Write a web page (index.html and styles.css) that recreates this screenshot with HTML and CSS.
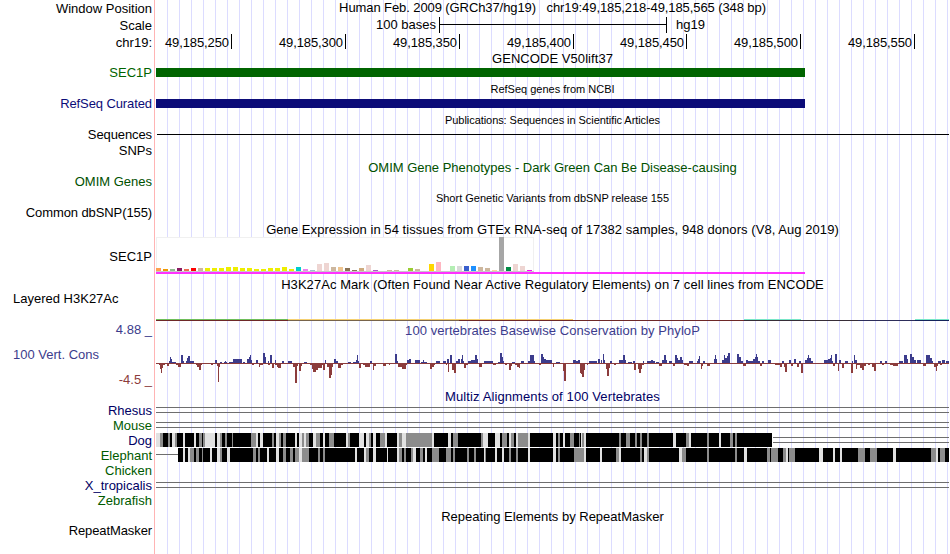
FILE: index.html
```
<!DOCTYPE html>
<html lang="en">
<head>
  <meta charset="UTF-8">
  <title>chr19:49,185,218-49,185,565 - Genome Browser</title>
  <link rel="stylesheet" href="styles.css">
</head>
<body>

<div class="browser">
  <div class="row position">
    <div class="label">Window Position</div>
    <div class="title t-position">Human Feb. 2009 (GRCh37/hg19) &nbsp; chr19:49,185,218-49,185,565 (348 bp)</div>
  </div>

  <div class="row scale">
    <div class="label">Scale</div>
    <div class="scale-track">
      <span class="scale-text">100 bases</span>
      <span class="scale-bar"></span>
      <span class="scale-db">hg19</span>
    </div>
  </div>

  <div class="row ruler">
    <div class="label">chr19:</div>
    <div class="ruler-track">
      <span>49,185,250</span>
      <span>49,185,300</span>
      <span>49,185,350</span>
      <span>49,185,400</span>
      <span class="short">49,185,450</span>
      <span>49,185,500</span>
      <span>49,185,550</span>
    </div>
  </div>

  <div class="row head">
    <div class="label"></div>
    <div class="title t-gencode">GENCODE V50lift37</div>
  </div>
  <div class="row gene">
    <div class="label green">SEC1P</div>
    <div class="gene-bar gencode"></div>
  </div>

  <div class="row head small">
    <div class="label"></div>
    <div class="title">RefSeq genes from NCBI</div>
  </div>
  <div class="row gene">
    <div class="label navy tight">RefSeq Curated</div>
    <div class="gene-bar refseq"></div>
  </div>

  <div class="row head small">
    <div class="label"></div>
    <div class="title t-pubs">Publications: Sequences in Scientific Articles</div>
  </div>
  <div class="row sequences">
    <div class="label tight">Sequences</div>
    <div class="seq-line"></div>
  </div>
  <div class="row snps">
    <div class="label">SNPs</div>
  </div>

  <div class="row head">
    <div class="label"></div>
    <div class="title omim">OMIM Gene Phenotypes - Dark Green Can Be Disease-causing</div>
  </div>
  <div class="row gene">
    <div class="label omim">OMIM Genes</div>
  </div>

  <div class="row head small">
    <div class="label"></div>
    <div class="title">Short Genetic Variants from dbSNP release 155</div>
  </div>
  <div class="row dbsnp">
    <div class="label tight">Common dbSNP(155)</div>
  </div>

  <div class="row head">
    <div class="label"></div>
    <div class="title wide">Gene Expression in 54 tissues from GTEx RNA-seq of 17382 samples, 948 donors (V8, Aug 2019)</div>
  </div>
  <div class="row gtex">
    <div class="label">SEC1P</div>
    <svg id="gtex" width="793" height="41" viewBox="156 236 793 41"></svg>
  </div>

  <div class="row head">
    <div class="label"></div>
    <div class="title wide">H3K27Ac Mark (Often Found Near Active Regulatory Elements) on 7 cell lines from ENCODE</div>
  </div>
  <div class="row h3k">
    <div class="label left">Layered H3K27Ac</div>
    <svg id="h3k" width="793" height="32" viewBox="156 291 793 32"></svg>
  </div>

  <div class="row head">
    <div class="label limit-max">4.88 _</div>
    <div class="title phylop wide">100 vertebrates Basewise Conservation by PhyloP</div>
  </div>
  <div class="row cons">
    <div class="label">
      <div class="cons-name">100 Vert. Cons</div>
      <div class="limit-min">-4.5 _</div>
    </div>
    <svg id="phylop" width="793" height="52" viewBox="156 337 793 52"></svg>
  </div>

  <div class="row head">
    <div class="label"></div>
    <div class="title multiz t-multiz">Multiz Alignments of 100 Vertebrates</div>
  </div>
  <div class="row species">
    <div class="label multiz">Rhesus</div>
    <div class="gap-lines"></div>
  </div>
  <div class="row species">
    <div class="label green2">Mouse</div>
    <div class="gap-lines"></div>
  </div>
  <div class="row species">
    <div class="label multiz">Dog</div>
    <svg id="dog" width="793" height="15" viewBox="156 0 793 15"></svg>
  </div>
  <div class="row species">
    <div class="label green2">Elephant</div>
    <svg id="elephant" width="793" height="15" viewBox="156 0 793 15"></svg>
  </div>
  <div class="row species">
    <div class="label green2">Chicken</div>
  </div>
  <div class="row species">
    <div class="label multiz">X_tropicalis</div>
    <div class="gap-lines"></div>
  </div>
  <div class="row species">
    <div class="label green2">Zebrafish</div>
  </div>

  <div class="row head repeats">
    <div class="label"></div>
    <div class="title">Repeating Elements by RepeatMasker</div>
  </div>
  <div class="row">
    <div class="label tight">RepeatMasker</div>
  </div>
</div>

<script src="tracks.js"></script>
</body>
</html>
```
FILE: styles.css
```
body {
  margin: 0;
  background-color: #fff;
  font-family: "Liberation Sans", Arial, Helvetica, sans-serif;
  font-size: 13px;
  line-height: 15px;
  color: #000;
}

/* guide lines every 12px, starting right of the label column */
.browser {
  width: 949px;
  height: 554px;
  overflow: hidden;
  background-image:
    linear-gradient(#ffb4b4, #ffb4b4),
    repeating-linear-gradient(to right, #dcdcff 0, #dcdcff 1px, transparent 1px, transparent 12px);
  background-size: 1px 100%, 782px 100%;
  background-position: 154px 0, 167px 0;
  background-repeat: no-repeat;
}

.row {
  display: grid;
  grid-template-columns: 152px 793px;
  column-gap: 4px;
  white-space: nowrap;
}

.label {
  text-align: right;
}

.label.left {
  text-align: left;
  padding: 0 0 0 13px;
}

.label.tight {
  letter-spacing: -0.1px;
}

.title {
  text-align: center;
}

.title.wide {
  letter-spacing: 0.06px;
}

.t-position { letter-spacing: -0.09px; }
.t-gencode { letter-spacing: 0.06px; }
.t-pubs { letter-spacing: -0.06px; }
.t-multiz { letter-spacing: 0.11px; }

.head {
  height: 14px;
}

.head.small {
  height: 13px;
  font-size: 11px;
  line-height: 12px;
}

svg {
  display: block;
  shape-rendering: crispEdges;
}

/* colours */
.green { color: #006400; }
.green2 { color: #005a00; }
.navy { color: #0c0c78; }
.omim { color: #005000; }
.phylop { color: #3c3c8c; }
.multiz { color: #000064; }

/* position, scale and ruler */
.position {
  height: 17px;
}

.position .label,
.scale .label,
.ruler .label {
  padding-top: 1px;
}

.scale,
.ruler {
  height: 17px;
}

.scale-track {
  display: flex;
  padding-left: 220px;
}

.scale-text {
  width: 60px;
  margin-right: 3px;
  text-align: right;
}

.scale-bar {
  width: 226px;
  height: 16px;
  border-left: 1px solid #000;
  border-right: 1px solid #000;
  background: linear-gradient(#000, #000) 0 7px / 100% 1px no-repeat;
}

.scale-db {
  margin-left: 9px;
}

.ruler-track {
  display: flex;
}

.ruler-track span {
  box-sizing: border-box;
  width: 114px;
  height: 15px;
  padding: 1px 2px 0 0;
  border-right: 1px solid #000;
  text-align: right;
  letter-spacing: -0.1px;
}

.ruler-track span:first-child {
  width: 76px;
}

.ruler-track .short {
  width: 113px;
}

/* genes */
.gene {
  height: 18px;
}

.gene-bar {
  width: 649px;
  height: 9px;
  margin-top: 3px;
}

.gencode { background-color: #006400; }
.refseq { background-color: #0c0c78; }

.sequences {
  height: 16px;
}

.seq-line {
  height: 1px;
  margin: 7px 0 0 1px;
  background-color: #000;
}

.snps,
.dbsnp {
  height: 17px;
}

/* signal tracks */
.gtex {
  height: 41px;
}

.gtex .label {
  padding-top: 13px;
}

.h3k {
  height: 32px;
}

.limit-max {
  margin-top: -1px;
  color: #3c3c8c;
}

.cons {
  height: 52px;
}

.cons-name {
  padding: 10px 0 10px 13px;
  text-align: left;
  color: #3c3c8c;
}

.limit-min {
  color: #8c3c3c;
}

/* multiz */
.species {
  height: 15px;
}

.gap-lines {
  height: 4px;
  margin-top: 4px;
  border-top: 1px solid #6e6e6e;
  border-bottom: 1px solid #6e6e6e;
}

.repeats {
  margin-top: 1px;
}
```
FILE: tracks.js
```
const SVG_NS = "http://www.w3.org/2000/svg";

function addRect(svg, x, y, width, height, fill) {
  const rect = document.createElementNS(SVG_NS, "rect");
  rect.setAttribute("x", x);
  rect.setAttribute("y", y);
  rect.setAttribute("width", width);
  rect.setAttribute("height", height);
  rect.setAttribute("fill", fill);
  svg.appendChild(rect);
}

// GTEx: one bar per tissue, [height, colour]
const tissues = [
  [3, "#ff9f4f"], [2, "#ee9a00"], [2, "#8fbc8f"], [3, "#8b1c62"], [2, "#ee6a50"], [3, "#ff0000"],
  [3, "#cdb79e"], [3, "#eeee00"], [3, "#eeee00"], [3, "#eeee00"], [4, "#eeee00"], [4, "#eeee00"],
  [3, "#eeee00"], [3, "#eeee00"], [2, "#eeee00"], [2, "#eeee00"], [3, "#eeee00"], [3, "#eeee00"],
  [4, "#eeee00"], [2, "#eeee00"], [4, "#00cdcd"], [2, "#ee82ee"], [1, "#9ac0cd"], [7, "#eed5d2"],
  [8, "#eed5d2"], [4, "#cdb79e"], [4, "#eec591"], [3, "#8b7355"], [1, "#8b7355"], [3, "#cdaa7d"],
  [6, "#eed5d2"], [1, "#b452cd"], [0, "#7a378b"], [1, "#cdb79e"], [1, "#cdb79e"], [0, "#cdb79e"],
  [3, "#9acd32"], [2, "#cdb79e"], [0, "#7a67ee"], [7, "#ffd700"], [9, "#ffb6c1"], [0, "#cd9b1d"],
  [5, "#b4eeb4"], [5, "#d9d9d9"], [5, "#3a5fcd"], [5, "#1e90ff"], [4, "#cdb79e"], [3, "#cdb79e"],
  [1, "#ffd39b"], [34, "#a6a6a6"], [4, "#008b45"], [7, "#eed5d2"], [5, "#eed5d2"], [1, "#ff00ff"]
];

function drawGtex() {
  const svg = document.getElementById("gtex");
  addRect(svg, 156, 237, 378, 35, "#f0f0f0");
  addRect(svg, 157, 238, 376, 33, "#ffffff");
  addRect(svg, 156, 271, 378, 1, "#c8c8c8");
  tissues.forEach(([height, colour], i) => {
    addRect(svg, 156 + i * 7, 271 - height, 5, height, colour);
  });
  addRect(svg, 156, 272, 649, 2, "#ff32ff");
}

function drawH3k() {
  const svg = document.getElementById("h3k");
  addRect(svg, 156, 319, 132, 1, "#6ebe5a");
  addRect(svg, 288, 319, 285, 1, "#f5d070");
  addRect(svg, 744, 319, 57, 1, "#78e6c8");
  addRect(svg, 915, 319, 34, 1, "#78e6c8");
  addRect(svg, 156, 320, 132, 1, "#6e2828");
  addRect(svg, 288, 320, 171, 1, "#78644b");
  addRect(svg, 459, 320, 285, 1, "#6e2828");
  addRect(svg, 744, 320, 114, 1, "#372d37");
  addRect(svg, 858, 320, 57, 1, "#2d2d5a");
  addRect(svg, 915, 320, 34, 1, "#14235a");
}

// PhyloP scores as [x, width, height], negative heights hang below the axis
const scores = [
  [159, 1, -2], [160, 1, -6], [161, 1, -10], [162, 1, -5], [163, 2, -2], [167, 2, -3],
  [169, 1, 2], [170, 1, 6], [171, 1, 4], [172, 4, 1], [176, 2, -2], [178, 3, -4],
  [181, 2, 8], [183, 1, 2], [186, 1, 2], [187, 1, 5], [188, 2, 7], [190, 4, 2],
  [196, 1, -2], [197, 2, -4], [199, 2, -7], [201, 1, -2], [211, 2, -2], [215, 2, 3],
  [217, 1, -3], [218, 1, -19], [219, 1, -4], [220, 2, 1], [224, 3, 1], [225, 1, 2],
  [229, 4, 1], [233, 9, 4], [243, 2, 1], [247, 2, 4], [249, 1, 6], [250, 1, 8], [251, 1, 3],
  [252, 2, -2], [256, 2, 3], [259, 1, -4], [260, 3, -2], [263, 2, 10], [265, 1, 6],
  [268, 1, 2], [268, 2, -2], [270, 2, 8], [272, 2, -5], [275, 1, 3], [275, 2, -2],
  [277, 1, -4], [278, 3, -5], [282, 2, 2], [283, 2, -1], [288, 4, 2], [293, 2, -4],
  [295, 2, -20], [297, 1, -3], [299, 2, -8], [301, 1, -3], [304, 3, 1], [310, 2, -2],
  [312, 1, -6], [313, 3, -9], [316, 2, -7], [318, 4, -5], [322, 1, -2], [323, 2, -7],
  [325, 1, 3], [327, 2, -4], [329, 2, -15], [331, 1, -12], [332, 1, -4], [334, 2, 4],
  [336, 2, 2], [338, 3, -5], [341, 2, -2], [348, 3, 1], [353, 3, 1], [356, 1, 3],
  [357, 1, 8], [358, 1, 2], [359, 2, -5], [363, 2, -2], [365, 5, -4], [370, 2, 2],
  [373, 1, -7], [374, 2, -3], [376, 3, -1], [383, 3, -3], [389, 1, -2], [395, 2, 9],
  [397, 1, 2], [398, 4, -4], [402, 4, -6], [406, 1, -2], [407, 2, 3], [409, 2, 4], [415, 5, 3],
  [421, 2, 1], [423, 1, 3], [424, 3, 1], [427, 2, -1], [430, 2, -6], [432, 2, -4], [434, 1, -2],
  [436, 4, 2], [441, 2, -1], [443, 3, 2], [446, 1, -2], [447, 2, 4], [448, 1, -9],
  [450, 2, 8], [452, 2, -7], [454, 2, -10], [456, 2, 2], [458, 2, 4], [461, 1, 4],
  [462, 1, 8], [463, 1, 2], [464, 2, -5], [466, 2, -2], [468, 3, 2], [471, 4, 3],
  [475, 2, 8], [477, 1, 4], [479, 3, -4], [484, 9, 2], [493, 3, -2], [498, 2, 1],
  [500, 2, 10], [502, 1, 6], [503, 1, 2], [505, 2, -2], [509, 2, -7], [511, 1, -3],
  [512, 3, 1], [515, 2, -2], [517, 2, -4], [519, 1, -5], [521, 3, 2], [528, 2, 2],
  [530, 4, 8], [534, 1, 2], [539, 2, -2], [541, 2, 9], [543, 1, 6], [544, 2, 4],
  [546, 6, 3], [553, 1, -4], [556, 4, 1], [563, 1, -8], [564, 2, -18], [573, 3, 3],
  [576, 2, 2], [578, 2, 3], [580, 1, -10], [581, 1, -11], [582, 2, -14], [584, 1, -7],
  [587, 1, -2], [589, 8, 2], [598, 2, 4], [601, 1, 3], [603, 1, 9], [604, 1, 3],
  [606, 1, -6], [607, 2, -13], [609, 1, -5], [610, 2, 2], [614, 2, -2], [619, 4, 3],
  [623, 2, 8], [625, 1, 3], [628, 4, 1], [633, 2, 2], [634, 2, -7], [638, 1, -6],
  [639, 2, -10], [641, 1, -6], [642, 2, -2], [643, 1, 2], [647, 8, 2], [651, 2, 3],
  [656, 3, 1], [659, 3, -3], [662, 2, 3], [664, 2, 8], [666, 1, 3], [669, 3, 2],
  [673, 2, -3], [675, 2, 8], [677, 1, 5], [678, 2, 3], [680, 2, 6], [682, 1, 3],
  [684, 3, -2], [687, 2, -3], [689, 4, 2], [697, 1, 2], [698, 1, 4], [699, 1, 7],
  [701, 1, -6], [702, 1, -3], [703, 2, 2], [707, 3, -3], [714, 1, 4], [715, 1, 8],
  [716, 1, 4], [719, 2, -1], [722, 2, 3], [724, 1, 8], [725, 2, 5], [727, 1, 7],
  [728, 2, 10], [737, 2, 9], [739, 2, 6], [741, 2, 2], [743, 3, -3], [746, 2, 3],
  [748, 5, 2], [753, 2, 4], [755, 1, 6], [756, 1, 9], [757, 1, 6], [758, 2, 2],
  [760, 2, -3], [762, 2, 2], [768, 3, 3], [775, 5, -2], [780, 2, -4], [782, 2, 2],
  [784, 1, -4], [785, 2, -9], [789, 2, 3], [791, 2, -3], [794, 2, 4], [797, 2, -4],
  [799, 2, 2], [801, 2, -10], [805, 2, 3], [807, 1, 5], [808, 1, 8], [809, 2, 5],
  [811, 2, 2], [824, 4, 3], [828, 2, 4], [830, 1, 5], [831, 1, 8], [832, 1, 2],
  [833, 2, -3], [835, 2, 9], [838, 1, -8], [839, 2, 3], [842, 2, -5], [845, 3, 2],
  [851, 2, -10], [852, 1, 2], [854, 1, 8], [855, 2, 3], [856, 1, -6], [857, 3, -2],
  [860, 2, -5], [862, 2, -7], [864, 2, -3], [868, 2, -2], [872, 2, -4], [874, 2, -8],
  [880, 2, 2], [882, 2, -2], [885, 2, 2], [890, 3, -2], [893, 5, -3], [899, 4, 2],
  [904, 3, 8], [907, 1, 4], [910, 2, 9], [912, 2, 6], [914, 2, 3], [917, 4, 3],
  [923, 3, -3], [926, 4, 8], [930, 2, 5], [932, 1, 2], [934, 2, -4], [936, 1, -8],
  [937, 1, -3], [938, 3, 2], [940, 2, -2], [942, 3, 3], [946, 3, 2]
];

function drawPhylop() {
  const svg = document.getElementById("phylop");
  addRect(svg, 156, 363, 793, 1, "#8c3c3c");
  scores.forEach(([x, width, height]) => {
    if (height > 0) {
      addRect(svg, x, 363 - height, width, height, "#3c3c8c");
    } else {
      addRect(svg, x, 363, width, -height, "#8c3c3c");
    }
  });
}

const LIGHT = "#e1e1e1";
const GREY = "#8c8c8c";
const LINE = "#6e6e6e";

// non-identical stretches of each alignment as [start, end]
const dogLight = [
  [156, 160], [172, 175], [183, 185], [194, 196], [205, 215], [217, 220], [256, 258], [260, 263],
  [276, 279], [295, 297], [299, 302], [304, 306], [313, 316], [323, 325], [346, 348], [359, 364],
  [366, 369], [373, 376], [385, 387], [397, 399], [402, 406], [432, 434], [448, 451], [483, 488],
  [495, 500], [509, 511], [516, 518], [528, 530], [553, 556], [563, 565], [581, 582], [584, 586],
  [673, 676], [689, 691], [719, 721]
];
const dogGrey = [
  [160, 163], [168, 170], [175, 177], [199, 202], [203, 205], [220, 222], [225, 227], [232, 233],
  [251, 256], [272, 274], [279, 281], [283, 286], [302, 304], [306, 309], [316, 320], [329, 334],
  [348, 350], [369, 371], [380, 385], [399, 402], [406, 432], [453, 458], [481, 483], [502, 507],
  [511, 514], [518, 528], [558, 560], [570, 574], [579, 580], [582, 584], [619, 621], [626, 630],
  [635, 637], [640, 642], [647, 649], [686, 689], [707, 709], [730, 733], [735, 737]
];
const elephantLight = [
  [183, 185], [188, 190], [210, 212], [217, 220], [227, 230], [267, 269], [276, 279], [299, 302],
  [355, 357], [364, 366], [373, 376], [387, 388], [397, 399], [413, 416], [425, 427], [484, 485],
  [495, 497], [502, 504], [528, 530], [553, 556], [584, 586], [600, 602], [619, 621], [644, 647],
  [679, 682], [744, 747], [786, 788], [819, 823], [833, 835], [840, 842], [893, 896], [936, 938]
];
const elephantGrey = [
  [190, 194], [196, 199], [202, 203], [220, 222], [253, 256], [258, 260], [283, 286], [290, 293],
  [295, 299], [302, 309], [318, 320], [323, 325], [366, 369], [399, 402], [404, 406], [411, 413],
  [420, 423], [432, 439], [446, 451], [453, 455], [467, 469], [474, 476], [485, 486], [509, 511],
  [516, 518], [558, 560], [574, 584], [616, 619], [640, 642], [647, 649], [682, 686], [707, 709],
  [735, 737], [767, 770], [771, 778], [783, 786], [789, 795], [858, 865], [870, 877], [931, 936],
  [940, 945]
];

function drawAlignment(id, start, end, light, grey) {
  const svg = document.getElementById(id);
  addRect(svg, start, 0, end - start, 14, "#000000");
  light.forEach(([a, b]) => addRect(svg, a, 0, b - a, 14, LIGHT));
  grey.forEach(([a, b]) => addRect(svg, a, 0, b - a, 14, GREY));
}

drawGtex();
drawH3k();
drawPhylop();

drawAlignment("dog", 156, 772, dogLight, dogGrey);
addRect(document.getElementById("dog"), 773, 4, 176, 1, LINE);
addRect(document.getElementById("dog"), 773, 9, 176, 1, LINE);

drawAlignment("elephant", 178, 949, elephantLight, elephantGrey);
addRect(document.getElementById("elephant"), 156, 6, 22, 1, LINE);
```
